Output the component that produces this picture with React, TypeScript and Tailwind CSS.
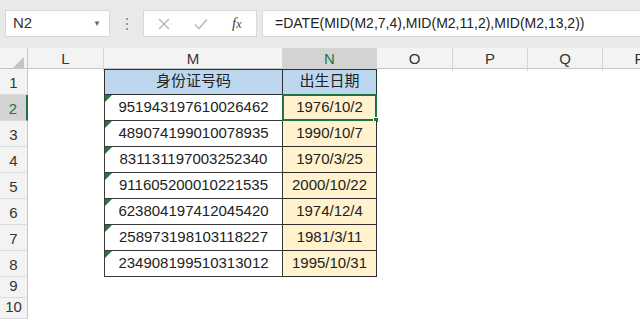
import React from "react";

const font = "font-['Liberation_Sans','Noto_Sans_CJK_SC',sans-serif]";

const cols = ["L", "M", "N", "O", "P", "Q", "R"];
const grid = "grid grid-cols-[28px_76px_179px_94px_76px_75px_75px_75px]";

const data = [
  ["951943197610026462", "1976/10/2"],
  ["489074199010078935", "1990/10/7"],
  ["831131197003252340", "1970/3/25"],
  ["911605200010221535", "2000/10/22"],
  ["623804197412045420", "1974/12/4"],
  ["258973198103118227", "1981/3/11"],
  ["234908199510313012", "1995/10/31"],
];

function RowHead({ n, active, h }: { n: number; active?: boolean; h: string }) {
  return (
    <div
      className={`${h} flex items-end justify-center pb-[1px] border-b border-[#dadada] ${
        active
          ? "bg-[#d3d3d3] text-[#217346] border-r-2 border-r-[#217346]"
          : "bg-[#f3f3f3] text-[#333] border-r border-r-[#c6c6c6]"
      } text-[15px] leading-[20px]`}
    >
      {n}
    </div>
  );
}

export default function App() {
  return (
    <div className={`${font} w-[640px] h-[321px] overflow-hidden bg-white text-[#222]`}>
      {/* formula bar */}
      <div className="h-[48px] bg-[#e9e9e9] pt-[10px]">
        <div className="flex h-[27px]">
          <div className="ml-[5px] w-[105px] bg-white border border-[#d8d8d8] flex items-center justify-between pl-[7px] pr-[8px] text-[15px] text-[#333]">
            <span>N2</span>
            <span className="text-[8px] text-[#666]">▼</span>
          </div>
          <div className="w-[33px] flex flex-col items-center justify-center gap-[3px]">
            <span className="w-[2px] h-[2px] bg-[#9a9a9a]" />
            <span className="w-[2px] h-[2px] bg-[#9a9a9a]" />
            <span className="w-[2px] h-[2px] bg-[#9a9a9a]" />
          </div>
          <div className="w-[114px] bg-white border border-[#d8d8d8] flex items-center">
            <svg className="ml-[14px]" width="12" height="12" viewBox="0 0 12 12">
              <path d="M1 1L11 11M11 1L1 11" stroke="#b5b5b5" strokeWidth="1.3" fill="none" />
            </svg>
            <svg className="ml-[24px]" width="14" height="12" viewBox="0 0 14 12">
              <path d="M1 6.5L5 10.5L13 1.5" stroke="#b5b5b5" strokeWidth="1.4" fill="none" />
            </svg>
            <span className="ml-[24px] font-['Liberation_Serif',serif] italic text-[15px] text-[#444]">
              f<span className="text-[12px]">x</span>
            </span>
          </div>
          <div className="ml-[5px] flex-1 bg-white border border-[#d8d8d8] border-r-0 flex items-center pl-[12px] text-[14px] text-[#222]">
            =DATE(MID(M2,7,4),MID(M2,11,2),MID(M2,13,2))
          </div>
        </div>
      </div>

      {/* column headers */}
      <div className={`${grid} h-[21px] bg-[#f3f3f3] border-b border-[#c6c6c6]`}>
        <div className="relative border-r border-[#c6c6c6]">
          <div className="absolute right-[3px] bottom-[3px] w-0 h-0 border-l-[11px] border-l-transparent border-b-[11px] border-b-[#c4c4c4]" />
        </div>
        {cols.map((c) => (
          <div
            key={c}
            className={`flex items-center justify-center text-[15px] border-r border-[#d4d4d4] ${
              c === "N" ? "bg-[#d3d3d3] text-[#217346]" : "text-[#333]"
            }`}
          >
            {c}
          </div>
        ))}
      </div>

      {/* row 1 */}
      <div className={grid}>
        <RowHead n={1} h="h-[26px]" />
        <div />
        <div className="h-[26px] bg-[#bdd7ee] border border-[#303030] flex items-end justify-center pb-[2px] text-[15px]">
          身份证号码
        </div>
        <div className="h-[26px] bg-[#bdd7ee] border-y border-r border-[#1e3a2a] flex items-end justify-center pb-[2px] text-[15px]">
          出生日期
        </div>
        <div />
      </div>

      {data.map(([id, d], i) => (
        <div key={id} className={grid}>
          <RowHead n={i + 2} h="h-[26px]" active={i === 0} />
          <div />
          <div className="relative h-[26px] bg-white border-x border-b border-[#3a3a3a] flex items-end justify-center pb-[2px] text-[15px]">
            <div className="absolute top-0 left-0 w-0 h-0 border-t-[7px] border-t-[#1d7a3c] border-r-[7px] border-r-transparent" />
            {id}
          </div>
          <div className="relative h-[26px] bg-[#fff2cc] border-r border-b border-[#2e2e2e] flex items-end justify-center pb-[2px] text-[15px]">
            {i === 0 && (
              <div className="absolute -left-[1px] -top-[1px] -right-[1px] -bottom-[1px] border-2 border-[#217346]">
                <div className="absolute -right-[4px] -bottom-[4px] w-[6px] h-[6px] bg-[#217346] border border-white" />
              </div>
            )}
            {d}
          </div>
          <div />
        </div>
      ))}

      <div className={grid}>
        <RowHead n={9} h="h-[21px]" />
      </div>
      <div className={grid}>
        <RowHead n={10} h="h-[21px]" />
      </div>
    </div>
  );
}
